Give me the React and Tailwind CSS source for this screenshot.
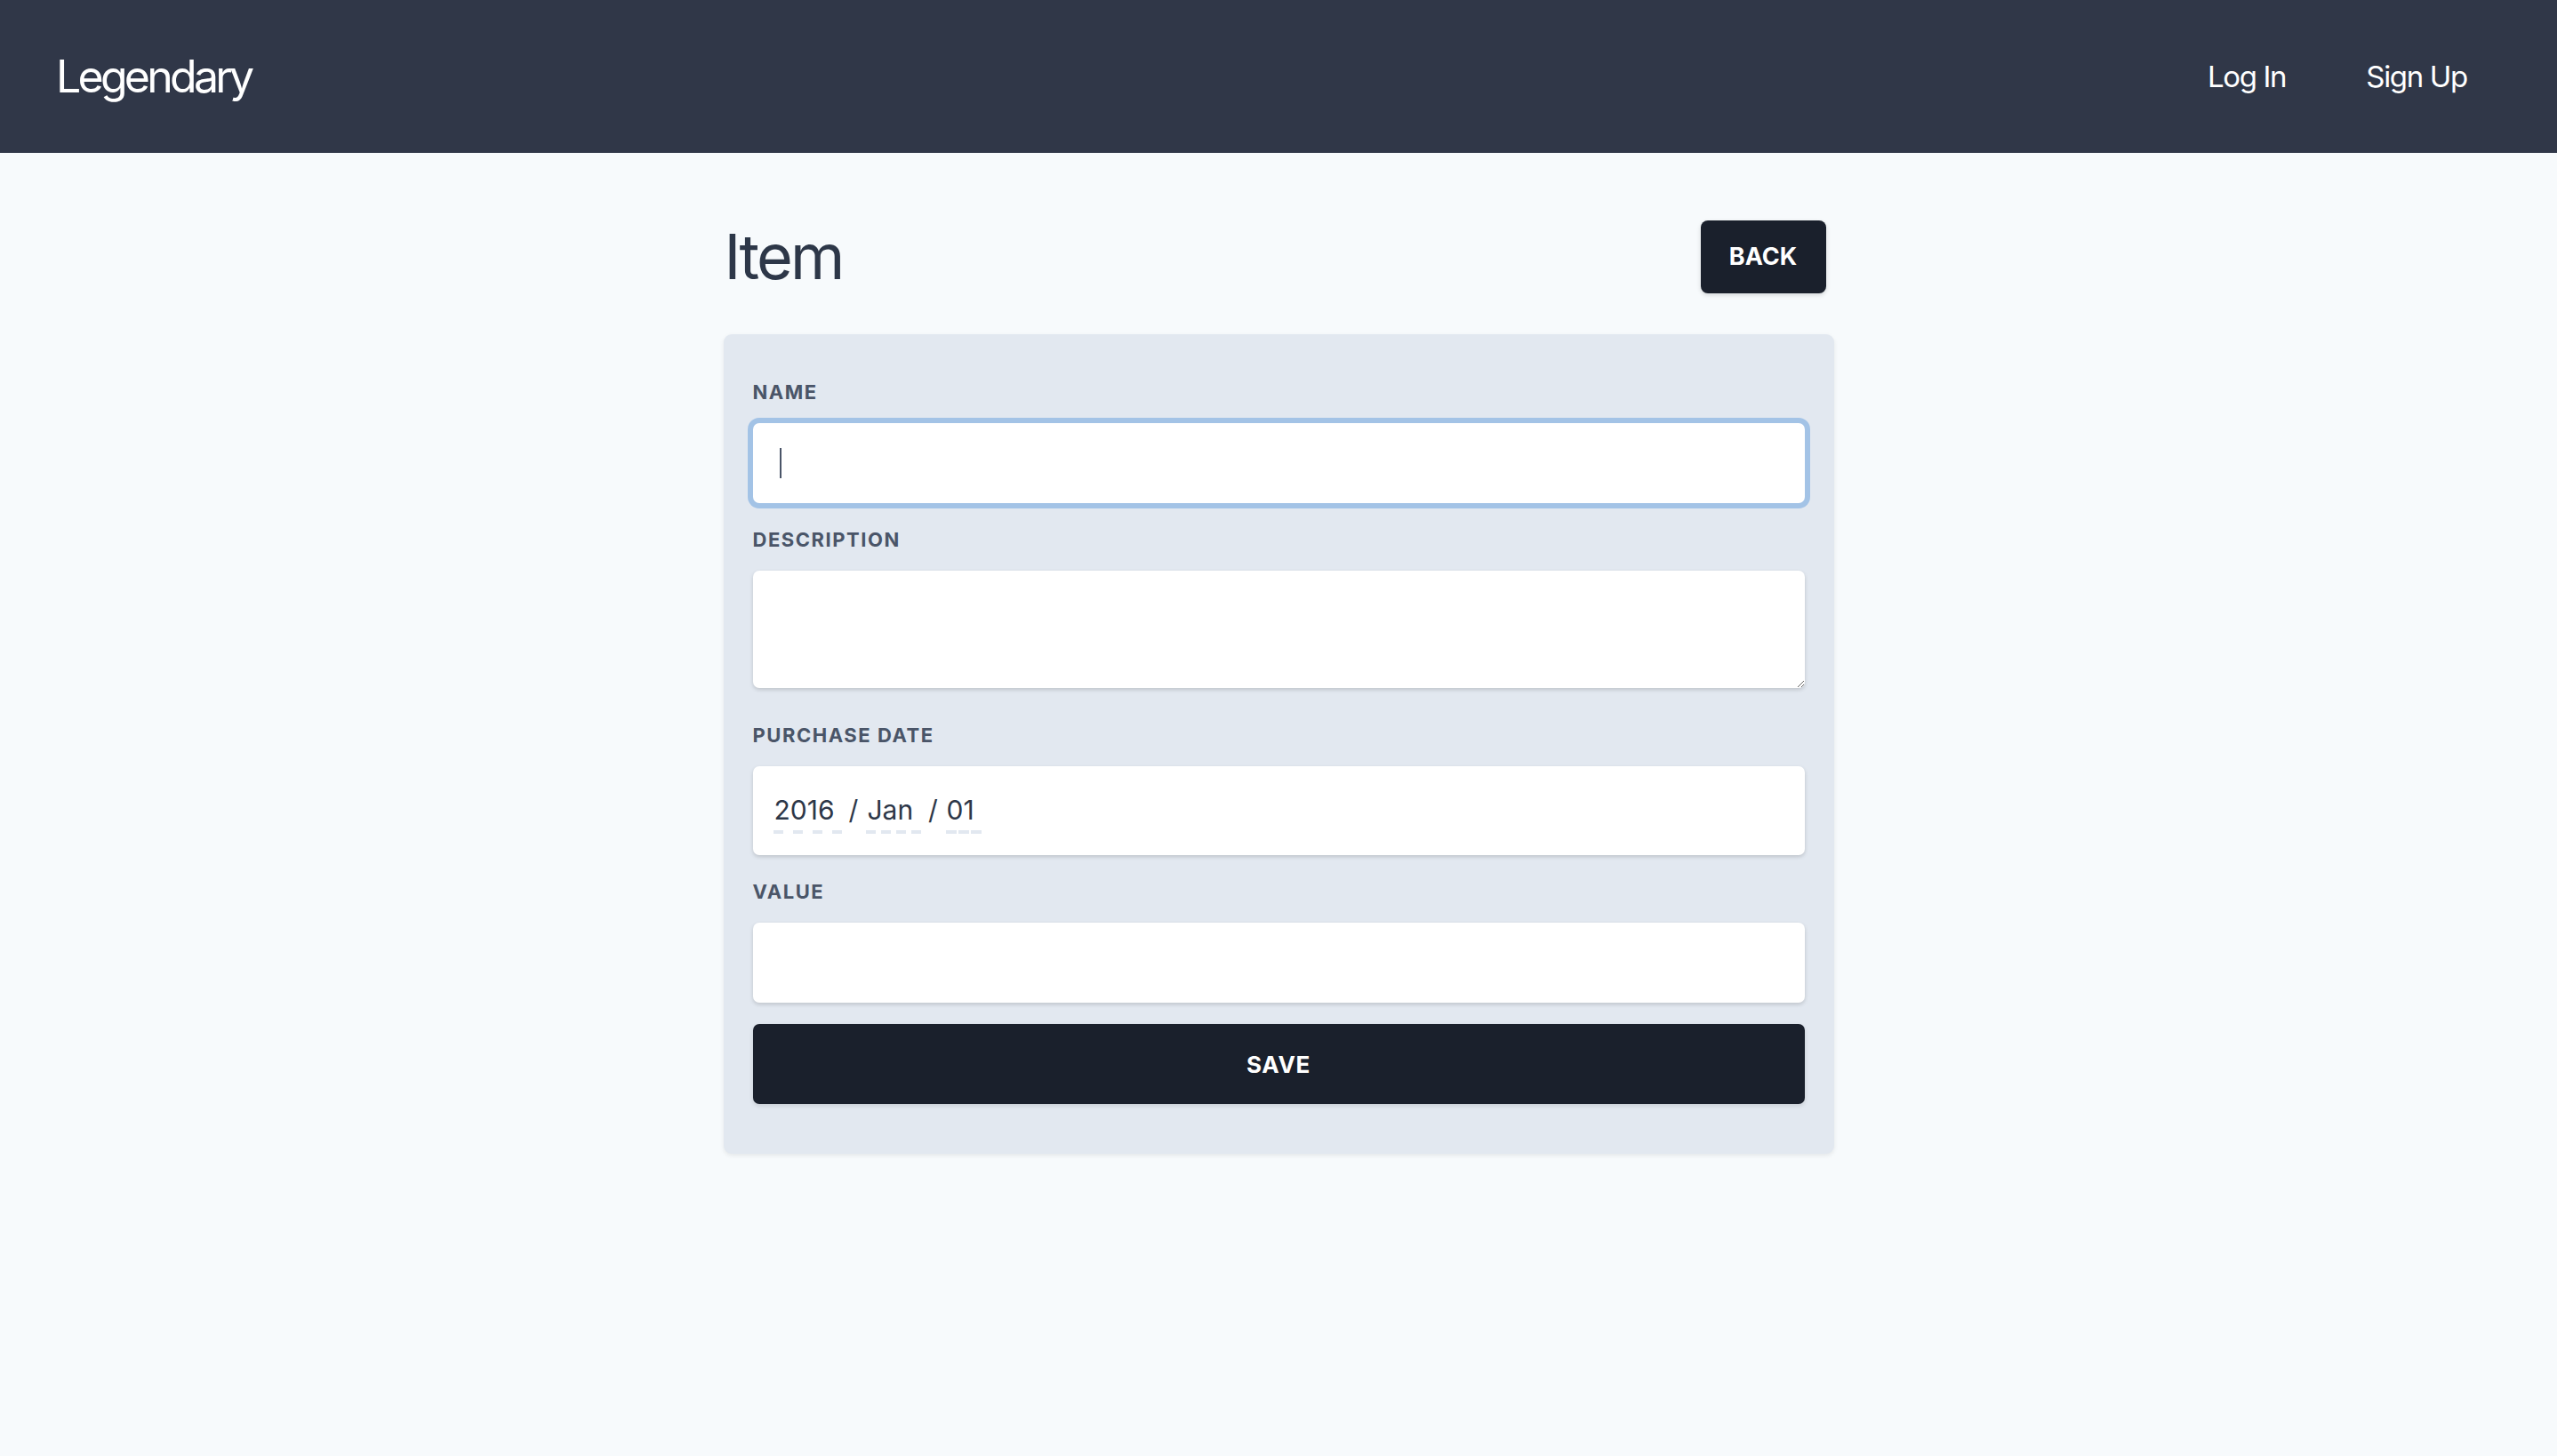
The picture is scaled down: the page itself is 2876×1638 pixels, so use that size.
import { useState } from 'react';

const labelClass =
  'block uppercase tracking-[0.07em] text-[#4a5568] text-[22px] leading-[26px] font-bold mb-[22px]';
const fieldBase =
  'block w-full bg-white rounded-[7px] text-[#2d3748] text-[30px] px-[30px] outline-none';
const fieldShadow = 'shadow-[0_2px_5px_rgba(0,0,0,0.1),0_2px_4px_rgba(0,0,0,0.06)]';

function Dashes({ count, dash, gap }) {
  return (
    <div className={`flex mt-[5px] ${gap}`}>
      {Array.from({ length: count }).map((_, i) => (
        <div key={i} className={`h-[4px] bg-[#e2e8f0] ${dash}`} />
      ))}
    </div>
  );
}

function DateField() {
  // mimics the native date input: yyyy / Mon / dd with dashed segment marks
  return (
    <div className={`w-full h-[100px] bg-white rounded-[7px] text-[#2d3748] text-[30px] leading-[36px] pl-[23px] pt-[31px] ${fieldShadow}`}>
      <div className="flex items-start">
        <div className="w-[77px] flex flex-col">
          <span className="pl-[1px]">2016</span>
          <Dashes count={4} dash="w-[11px]" gap="gap-[11px]" />
        </div>
        <span className="w-[27px] text-center">/</span>
        <div className="w-[62px] flex flex-col">
          <span className="pl-[2px]">Jan</span>
          <Dashes count={4} dash="w-[11px]" gap="gap-[6px]" />
        </div>
        <span className="w-[28px] text-center">/</span>
        <div className="w-[40px] flex flex-col">
          <span className="pl-[1px]">01</span>
          <Dashes count={3} dash="w-[12px]" gap="gap-[2px]" />
        </div>
      </div>
    </div>
  );
}

function App() {
  const [name, setName] = useState('');
  const [description, setDescription] = useState('');
  const [value, setValue] = useState('');

  return (
    <div className="min-h-screen bg-[#f7fafc] font-['Inter',sans-serif]">
      <nav className="h-[172px] bg-[#303748] flex items-center justify-between pl-[63px] pr-[101px]">
        <a href="#" className="text-white text-[50px] leading-none tracking-[-0.075em]">
          Legendary
        </a>
        <div className="flex items-center gap-[90px] text-white text-[33px] leading-none tracking-[-0.04em]">
          <a href="#">Log In</a>
          <a href="#">Sign Up</a>
        </div>
      </nav>

      <main className="w-[1249px] mx-auto pt-[76px] pb-[80px]">
        <div className="flex items-center justify-between h-[82px]">
          <h1 className="text-[70px] leading-none text-[#2d3748] pl-[1px] tracking-[-0.04em]">Item</h1>
          <button className="w-[141px] h-[82px] mr-[9px] bg-[#1a202c] text-white text-[27px] font-bold rounded-[8px] shadow-[0_2px_5px_rgba(0,0,0,0.15)]">
            BACK
          </button>
        </div>

        <form
          className="mt-[46px] bg-[#e2e8f0] rounded-[9px] px-[33px] pt-[52px] pb-[56px] shadow-[0_2px_5px_rgba(0,0,0,0.08)]"
          onSubmit={(e) => e.preventDefault()}
        >
          <label className={labelClass}>Name</label>
          <div className="relative">
            <input
              className={`${fieldBase} h-[90px] caret-transparent shadow-[0_0_0_6px_#a3c3e6]`}
              value={name}
              onChange={(e) => setName(e.target.value)}
            />
            <span className="absolute left-[30px] top-[28px] w-[2px] h-[34px] bg-[#4a5568]" />
          </div>

          <label className={`${labelClass} mt-[28px]`}>Description</label>
          <textarea
            className={`${fieldBase} ${fieldShadow} h-[132px] py-[16px] align-top`}
            value={description}
            onChange={(e) => setDescription(e.target.value)}
          />

          <label className={`${labelClass} mt-[40px]`}>Purchase Date</label>
          <DateField />

          <label className={`${labelClass} mt-[28px]`}>Value</label>
          <input
            className={`${fieldBase} ${fieldShadow} h-[90px]`}
            value={value}
            onChange={(e) => setValue(e.target.value)}
          />

          <button
            type="submit"
            className="mt-[24px] w-full h-[90px] bg-[#1a202c] text-white text-[26px] font-bold tracking-wide rounded-[7px] shadow-[0_2px_5px_rgba(0,0,0,0.12)]"
          >
            SAVE
          </button>
        </form>
      </main>
    </div>
  );
}

export default App;
